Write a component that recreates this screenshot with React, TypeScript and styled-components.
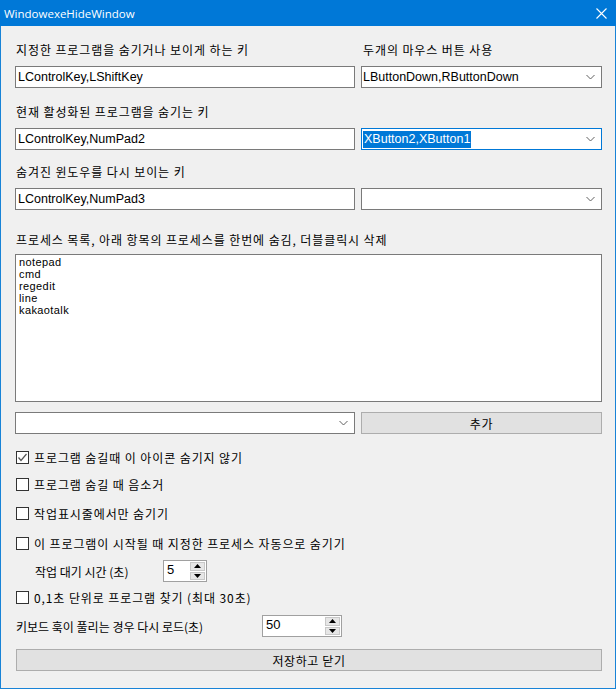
import React from "react";
import styled, { createGlobalStyle } from "styled-components";

const GlobalStyle = createGlobalStyle`
  html, body { margin: 0; padding: 0; background: #f0f0f0; }
  body { font-family: "Noto Sans CJK KR", sans-serif; }
  * { box-sizing: border-box; }
`;

const Window = styled.div`
  width: 616px;
  height: 689px;
  border: 1px solid #1883d7;
  border-top: none;
  background: #f0f0f0;
  display: flex;
  flex-direction: column;
`;

const TitleBar = styled.div`
  height: 26px;
  margin: 0 -1px;
  background: #0078d7;
  color: #fff;
  display: flex;
  align-items: center;
  justify-content: space-between;
  padding: 0 9px 0 4px;
  font-family: "Open Sans", "Noto Sans", sans-serif;
  font-size: 11.5px;
`;

const Content = styled.div`
  display: flex;
  flex-direction: column;
  padding: 0 13px 0 14px;
`;

const Label = styled.div<{ $mt: number; $ml?: number }>`
  margin-top: ${(p) => p.$mt}px;
  margin-left: ${(p) => p.$ml ?? 1}px;
  height: 16px;
  line-height: 16px;
  font-size: 12px;
  letter-spacing: 0.9px;
  color: #000;
  white-space: nowrap;
`;

const Row = styled.div<{ $mt: number; $h?: number }>`
  margin-top: ${(p) => p.$mt}px;
  display: grid;
  grid-template-columns: 340px 1fr;
  column-gap: 6px;
  height: ${(p) => p.$h ?? 22}px;
`;

const Field = styled.div`
  border: 1px solid #7a7a7a;
  background: #fff;
  height: 22px;
  padding: 0 2px;
  display: flex;
  align-items: center;
  font-family: "Liberation Sans Narrow", "Liberation Sans", sans-serif;
  font-size: 12.5px;
  color: #000;
`;

const Combo = styled(Field)<{ $focused?: boolean }>`
  border-color: ${(p) => (p.$focused ? "#0078d7" : "#7a7a7a")};
  justify-content: space-between;
  padding: 0 6px 0 1px;
`;

const Selected = styled.span`
  background: #0078d7;
  color: #fff;
  line-height: 17px;
  padding: 0 1px;
`;

const ListBox = styled.div`
  margin-top: 6px;
  height: 148px;
  border: 1px solid #7a7a7a;
  background: #fff;
  padding: 1px 3px;
  font-family: "Liberation Sans Narrow", "Liberation Sans", sans-serif;
  font-size: 11px;
  letter-spacing: 0.4px;
  line-height: 12px;
  color: #000;
`;

const ListItem = styled.div`
  height: 12px;
`;

const Button = styled.div<{ $mt?: number; $ml?: number }>`
  margin-top: ${(p) => p.$mt ?? 0}px;
  margin-left: ${(p) => p.$ml ?? 0}px;
  height: 22px;
  background: #e1e1e1;
  border: 1px solid #adadad;
  display: flex;
  align-items: center;
  justify-content: center;
  font-size: 12px;
  letter-spacing: 0.6px;
  color: #000;
`;

const CheckRow = styled.div<{ $mt: number }>`
  margin-top: ${(p) => p.$mt}px;
  height: 16px;
  display: flex;
  align-items: center;
  gap: 5px;
  padding-left: 1px;
  font-size: 12px;
  letter-spacing: 0.9px;
  color: #000;
  white-space: nowrap;
`;

const Box = styled.span`
  width: 13px;
  height: 13px;
  border: 1px solid #333;
  background: #fff;
  display: inline-flex;
  align-items: center;
  justify-content: center;
  flex: none;
`;

const SpinRow = styled.div<{ $mt: number; $pl: number }>`
  margin-top: ${(p) => p.$mt}px;
  height: 22px;
  display: flex;
  align-items: center;
  padding-left: ${(p) => p.$pl}px;
  font-size: 12px;
  color: #000;
  white-space: nowrap;
`;

const SpinLabel = styled.span<{ $w: number }>`
  width: ${(p) => p.$w}px;
`;

const Spin = styled.div<{ $w: number }>`
  width: ${(p) => p.$w}px;
  height: 22px;
  border: 1px solid #a0a0a0;
  background: #fff;
  display: flex;
  justify-content: space-between;
  padding: 1px;
  font-family: "Liberation Sans Narrow", "Liberation Sans", sans-serif;
  font-size: 13px;
`;

const SpinValue = styled.span`
  padding-left: 2px;
  line-height: 15px;
`;

const SpinButtons = styled.div`
  width: 15px;
  display: flex;
  flex-direction: column;
  gap: 1px;
`;

const SpinBtn = styled.div`
  flex: 1;
  background: #e6e6e6;
  border: 1px solid #c8c8c8;
  display: flex;
  align-items: center;
  justify-content: center;
`;

const Chevron = () => (
  <svg width="9" height="6" viewBox="0 0 9 6">
    <path d="M0.5 1 L4.5 5 L8.5 1" fill="none" stroke="#606060" strokeWidth="1" />
  </svg>
);

const Tri = ({ up }: { up?: boolean }) => (
  <svg width="7" height="4" viewBox="0 0 7 4">
    <path d={up ? "M0 4 L3.5 0 L7 4 Z" : "M0 0 L3.5 4 L7 0 Z"} fill="#000" />
  </svg>
);

const Check = ({ checked }: { checked?: boolean }) => (
  <Box>
    {checked && (
      <svg width="11" height="11" viewBox="0 0 11 11">
        <path d="M1.5 5.5 L4 8.5 L9.5 2" fill="none" stroke="#555" strokeWidth="1.2" />
      </svg>
    )}
  </Box>
);

const processes = ["notepad", "cmd", "regedit", "line", "kakaotalk"];

export default function App() {
  return (
    <>
      <GlobalStyle />
      <Window>
        <TitleBar>
          <span>WindowexeHideWindow</span>
          <svg width="11" height="11" viewBox="0 0 11 11">
            <path d="M0.5 0.5 L10.5 10.5 M10.5 0.5 L0.5 10.5" stroke="#fff" strokeWidth="1.1" />
          </svg>
        </TitleBar>
        <Content>
          <Row $mt={16} $h={16}>
            <Label $mt={0}>지정한 프로그램을 숨기거나 보이게 하는 키</Label>
            <Label $mt={0} $ml={2}>두개의 마우스 버튼 사용</Label>
          </Row>
          <Row $mt={8}>
            <Field>LControlKey,LShiftKey</Field>
            <Combo>
              <span>LButtonDown,RButtonDown</span>
              <Chevron />
            </Combo>
          </Row>
          <Label $mt={16}>현재 활성화된 프로그램을 숨기는 키</Label>
          <Row $mt={8}>
            <Field>LControlKey,NumPad2</Field>
            <Combo $focused>
              <Selected>XButton2,XButton1</Selected>
              <Chevron />
            </Combo>
          </Row>
          <Label $mt={14}>숨겨진 윈도우를 다시 보이는 키</Label>
          <Row $mt={8}>
            <Field>LControlKey,NumPad3</Field>
            <Combo>
              <span />
              <Chevron />
            </Combo>
          </Row>
          <Label $mt={22}>프로세스 목록, 아래 항목의 프로세스를 한번에 숨김, 더블클릭시 삭제</Label>
          <ListBox>
            {processes.map((p) => (
              <ListItem key={p}>{p}</ListItem>
            ))}
          </ListBox>
          <Row $mt={10}>
            <Combo>
              <span />
              <Chevron />
            </Combo>
            <Button>추가</Button>
          </Row>
          <CheckRow $mt={15}>
            <Check checked />
            프로그램 숨길때 이 아이콘 숨기지 않기
          </CheckRow>
          <CheckRow $mt={11}>
            <Check />
            프로그램 숨길 때 음소거
          </CheckRow>
          <CheckRow $mt={13}>
            <Check />
            작업표시줄에서만 숨기기
          </CheckRow>
          <CheckRow $mt={14}>
            <Check />이 프로그램이 시작될 때 지정한 프로세스 자동으로 숨기기
          </CheckRow>
          <SpinRow $mt={9} $pl={20}>
            <SpinLabel $w={128}>작업 대기 시간 (초)</SpinLabel>
            <Spin $w={44}>
              <SpinValue>5</SpinValue>
              <SpinButtons>
                <SpinBtn>
                  <Tri up />
                </SpinBtn>
                <SpinBtn>
                  <Tri />
                </SpinBtn>
              </SpinButtons>
            </Spin>
          </SpinRow>
          <CheckRow $mt={7}>
            <Check />
            0,1초 단위로 프로그램 찾기 (최대 30초)
          </CheckRow>
          <SpinRow $mt={10} $pl={1}>
            <SpinLabel $w={246}>키보드 훅이 풀리는 경우 다시 로드(초)</SpinLabel>
            <Spin $w={80}>
              <SpinValue>50</SpinValue>
              <SpinButtons>
                <SpinBtn>
                  <Tri up />
                </SpinBtn>
                <SpinBtn>
                  <Tri />
                </SpinBtn>
              </SpinButtons>
            </Spin>
          </SpinRow>
          <Button $mt={12} $ml={1}>저장하고 닫기</Button>
        </Content>
      </Window>
    </>
  );
}
